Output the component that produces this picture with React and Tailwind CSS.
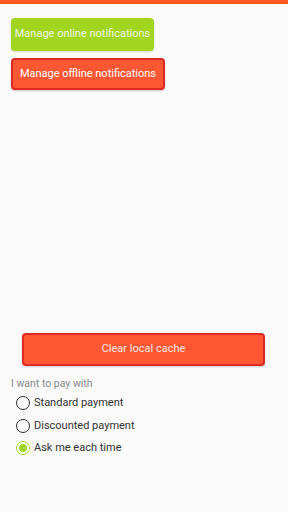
import React from "react";

function Radio({ checked, label }) {
  return (
    <div className="flex items-center h-[22.5px]">
      <span
        className={
          "ml-[16px] w-[14px] h-[14px] rounded-full border-[1.5px] flex items-center justify-center " +
          (checked ? "border-[#a2d61e]" : "border-[#333333]")
        }
      >
        {checked && <span className="w-[8px] h-[8px] rounded-full bg-[#a2d61e]" />}
      </span>
      <span className="ml-[4px] text-[11px] text-[#333333]">{label}</span>
    </div>
  );
}

export default function App() {
  return (
    <div
      className="w-[288px] h-[512px] bg-[#fafafa] flex flex-col"
      style={{ fontFamily: "Roboto, 'Liberation Sans', sans-serif" }}
    >
      <div className="h-[4px] bg-[#ff5722] shrink-0" />
      <div className="px-[11px] pt-[14px]">
        <button className="w-[143px] h-[33px] rounded-[4px] bg-[#a2d61e] text-[#eef3e0] text-[11px] flex items-center justify-center shadow-[0_1px_2px_rgba(0,0,0,0.15)]">
          Manage online notifications
        </button>
        <button className="mt-[7px] w-[154px] h-[32px] rounded-[4px] bg-[#ff5733] border-[2px] border-[#df2a24] text-white text-[11px] flex items-center justify-center shadow-[0_1px_2px_rgba(0,0,0,0.2)]">
          Manage offline notifications
        </button>
      </div>
      <div className="px-[22px] pt-[243px]">
        <button className="w-[243px] h-[33px] rounded-[4px] bg-[#ff5733] border-[2px] border-[#df2a24] text-[#fde8e0] text-[11px] flex items-center justify-center shadow-[0_1px_2px_rgba(0,0,0,0.2)]">
          Clear local cache
        </button>
      </div>
      <div className="pt-[11px]">
        <div className="pl-[11px] text-[10.5px] text-[#8a8a8a] leading-[13px]">I want to pay with</div>
        <div className="mt-[2px]">
          <Radio label="Standard payment" />
          <Radio label="Discounted payment" />
          <Radio checked label="Ask me each time" />
        </div>
      </div>
    </div>
  );
}
